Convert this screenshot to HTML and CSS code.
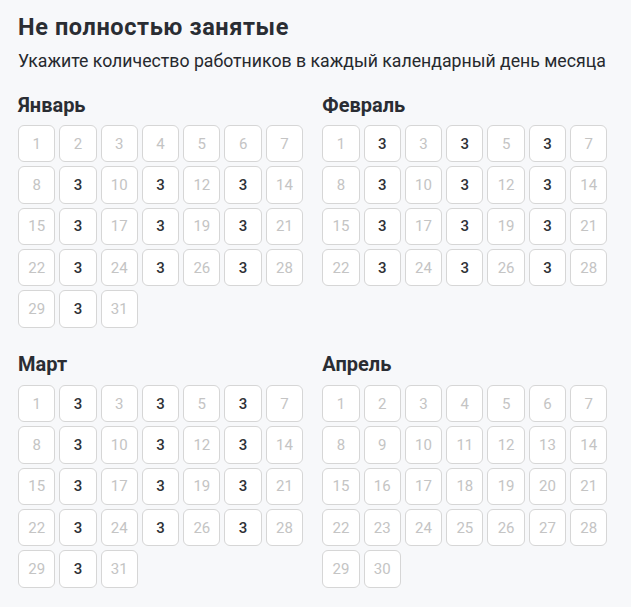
FILE: index.html
```html
<!DOCTYPE html>
<html lang="ru">
<head>
<meta charset="utf-8">
<link rel="stylesheet" href="styles.css">
</head>
<body>
<div class="page">
  <h1 class="title">Не полностью занятые</h1>
  <p class="subtitle">Укажите количество работников в каждый календарный день месяца</p>
  <div class="months" id="months"></div>
</div>
<script src="app.js"></script>
</body>
</html>
```
FILE: styles.css
```css
html, body {
  margin: 0;
  padding: 0;
  background: #f7f8fa;
}
body {
  font-family: Roboto, "Noto Sans", sans-serif;
  color: #2a2d33;
}
.page {
  padding: 14px 0 0 18px;
}
.title {
  margin: 0;
  font-size: 23.5px;
  line-height: 27px;
  font-weight: 700;
  letter-spacing: 0.6px;
  color: #2a2d33;
}
.subtitle {
  margin: 8.6px 0 0;
  font-size: 17.7px;
  line-height: 22px;
  font-weight: 400;
  color: #26292e;
}
.months {
  margin-top: 21px;
  display: grid;
  grid-template-columns: 285px 285px;
  column-gap: 19.3px;
  row-gap: 24.8px;
}
.month-name {
  margin: 0 0 8.6px;
  font-size: 20px;
  line-height: 24px;
  font-weight: 700;
  color: #2a2d33;
}
.days {
  display: grid;
  grid-template-columns: repeat(7, 37.3px);
  grid-auto-rows: 37.3px;
  gap: 4px;
}
.day {
  box-sizing: border-box;
  border: 1px solid #d6d6d6;
  border-radius: 6px;
  background: #fff;
  display: flex;
  align-items: center;
  justify-content: center;
  font-size: 15px;
  color: #c4c4c4;
}
.day.filled {
  color: #2f3136;
  font-weight: 500;
}
```
FILE: app.js
```js
var months = [
  { name: "Январь", days: 31, filled: [9,11,13,16,18,20,23,25,27,30] },
  { name: "Февраль", days: 28, filled: [2,4,6,9,11,13,16,18,20,23,25,27] },
  { name: "Март", days: 31, filled: [2,4,6,9,11,13,16,18,20,23,25,27,30] },
  { name: "Апрель", days: 30, filled: [] }
];
var root = document.getElementById("months");
months.forEach(function (m) {
  var sec = document.createElement("section");
  var h = document.createElement("h2");
  h.className = "month-name";
  h.textContent = m.name;
  sec.appendChild(h);
  var grid = document.createElement("div");
  grid.className = "days";
  for (var d = 1; d <= m.days; d++) {
    var c = document.createElement("div");
    var f = m.filled.indexOf(d) !== -1;
    c.className = "day" + (f ? " filled" : "");
    c.textContent = f ? "3" : String(d);
    grid.appendChild(c);
  }
  sec.appendChild(grid);
  root.appendChild(sec);
});
```
